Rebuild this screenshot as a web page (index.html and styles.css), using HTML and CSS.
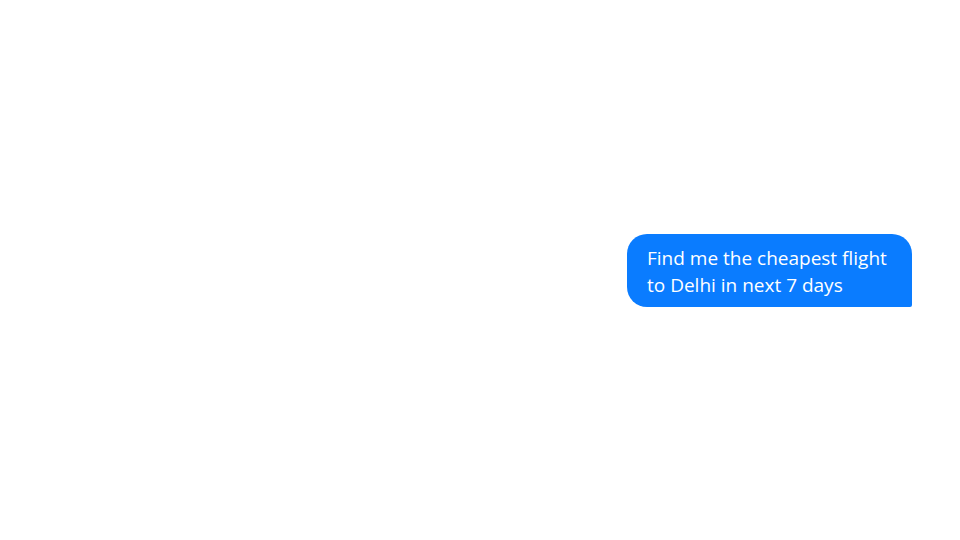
FILE: index.html
```html
<!DOCTYPE html>
<html lang="en">
<head>
  <meta charset="UTF-8" />
  <title>Chat</title>
  <link rel="stylesheet" href="styles.css">
</head>
<body>
  <div class="chat">
    <div class="bubble">Find me the cheapest flight<br>to Delhi in next 7 days</div>
  </div>
</body>
</html>
```

FILE: styles.css
```css
body {
  margin: 0;
  background: #fff;
  font-family: "Open Sans", "Noto Sans", sans-serif;
}

.chat {
  height: 540px;
  display: flex;
  justify-content: flex-end;
  align-items: center;
  padding-right: 48px;
}

.bubble {
  width: 285px;
  box-sizing: border-box;
  background: #0a7cff;
  color: #fff;
  font-size: 19px;
  line-height: 27px;
  padding: 11px 20px 8px 20px;
  border-radius: 20px 20px 2px 20px;
  margin-top: 1px;
}
```
